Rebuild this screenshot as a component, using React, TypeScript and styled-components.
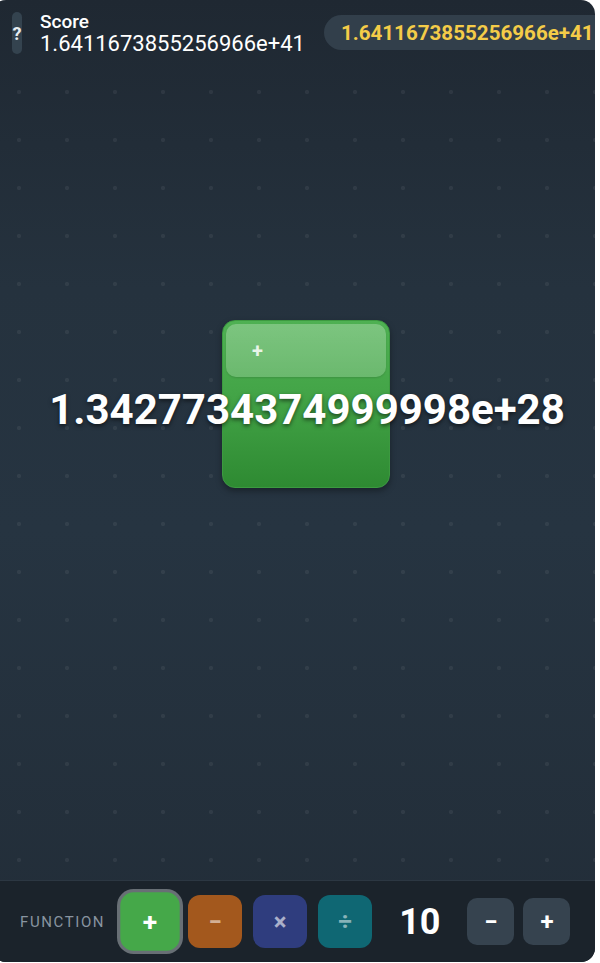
import React from "react";
import styled, { createGlobalStyle } from "styled-components";

const GlobalStyle = createGlobalStyle`
  html, body {
    margin: 0;
    padding: 0;
    background: #ffffff;
    overflow: hidden;
  }
  body {
    font-family: Roboto, "Liberation Sans", sans-serif;
  }
`;

const Frame = styled.div`
  width: 603px;
  height: 962px;
  margin-left: -8px;
  border-radius: 14px;
  overflow: hidden;
  display: flex;
  flex-direction: column;
  background: linear-gradient(180deg, #1f2832 0%, #25323e 30%, #263441 55%, #222d38 100%);
`;

const Header = styled.header`
  height: 64px;
  flex-shrink: 0;
  display: flex;
  align-items: flex-start;
  padding: 12px 0 0 20px;
  box-sizing: border-box;
  gap: 18px;
`;

const HelpButton = styled.button`
  width: 10px;
  height: 42px;
  flex-shrink: 0;
  border: none;
  padding: 0;
  border-radius: 999px;
  background: #34434f;
  color: #e8edf1;
  font-family: inherit;
  font-weight: 700;
  font-size: 18px;
  display: flex;
  align-items: center;
  justify-content: center;
  overflow: visible;
`;

const ScoreBlock = styled.div`
  display: flex;
  flex-direction: column;
  color: #ffffff;
  flex-shrink: 0;
`;

const ScoreTitle = styled.span`
  font-size: 19px;
  font-weight: 500;
  line-height: 20px;
`;

const ScoreValue = styled.span`
  font-size: 22px;
  font-weight: 400;
  line-height: 24px;
`;

const BestPill = styled.div`
  margin-left: 1px;
  margin-top: 3px;
  height: 35px;
  flex-shrink: 0;
  border-radius: 18px;
  background: #323f4b;
  color: #f4cc48;
  font-weight: 700;
  font-size: 20.6px;
  display: flex;
  align-items: center;
  padding: 0 30px 0 17px;
`;

const Canvas = styled.main`
  flex: 1;
  position: relative;
  background-image: radial-gradient(circle, rgba(255, 255, 255, 0.06) 1.8px, transparent 2.4px);
  background-size: 48px 48px;
  background-position: 3px -44px;
`;

const Node = styled.div<{ $left: number; $top: number }>`
  position: absolute;
  left: ${(p) => p.$left}px;
  top: ${(p) => p.$top}px;
  width: 168px;
  height: 168px;
  box-sizing: border-box;
  border-radius: 13px;
  background: linear-gradient(180deg, #4fb153 0%, #43a447 45%, #2e8a32 100%);
  border: 1px solid #3c9a40;
  box-shadow: 0 3px 6px rgba(0, 0, 0, 0.35);
`;

const NodeGloss = styled.div`
  margin: 3px;
  height: 53px;
  border-radius: 10px;
  background: linear-gradient(180deg, rgba(255, 255, 255, 0.26), rgba(255, 255, 255, 0.2));
  box-shadow: 0 1px 2px rgba(0, 0, 0, 0.12);
  display: flex;
  align-items: center;
  padding-left: 26px;
  color: rgba(255, 255, 255, 0.85);
  font-weight: 700;
  font-size: 20px;
`;

const NodeValue = styled.div`
  position: absolute;
  left: 50%;
  top: 88px;
  transform: translate(-50%, -50%);
  margin-left: 1px;
  white-space: nowrap;
  color: #ffffff;
  font-weight: 700;
  font-size: 42px;
  text-shadow: 0 2px 4px rgba(0, 0, 0, 0.55);
`;

const Toolbar = styled.footer`
  height: 82px;
  flex-shrink: 0;
  box-sizing: border-box;
  border-top: 1px solid #2c3742;
  background: #1b232b;
  display: flex;
  align-items: center;
  padding-left: 28px;
`;

const ToolLabel = styled.span`
  color: #8894a0;
  font-size: 15px;
  letter-spacing: 1.6px;
  margin-right: 18px;
`;

const OpGroup = styled.div`
  display: flex;
  gap: 11px;
  align-items: center;
`;

const OpButton = styled.button<{ $bg: string; $ink: string; $active?: boolean }>`
  width: 54px;
  height: 53px;
  border: none;
  border-radius: 12px;
  background: ${(p) => p.$bg};
  color: ${(p) => p.$ink};
  font-family: inherit;
  font-weight: 700;
  font-size: 24px;
  display: flex;
  align-items: center;
  justify-content: center;
  transform: ${(p) => (p.$active ? "scale(1.1)" : "none")};
  box-shadow: ${(p) => (p.$active ? "0 0 0 3px #686f75" : "none")};
`;

const Amount = styled.span`
  color: #ffffff;
  font-weight: 700;
  font-size: 36px;
  margin: 0 27px 0 27px;
`;

const StepButton = styled.button`
  width: 47px;
  height: 47px;
  border: none;
  border-radius: 10px;
  background: #36434f;
  color: #ffffff;
  font-family: inherit;
  font-weight: 700;
  font-size: 24px;
  display: flex;
  align-items: center;
  justify-content: center;
`;

const StepGroup = styled.div`
  display: flex;
  gap: 9px;
`;

const ops = [
  { sym: "+", bg: "#45a849", ink: "#ffffff", active: true },
  { sym: "−", bg: "#a3581d", ink: "rgba(255,255,255,0.55)" },
  { sym: "×", bg: "#2f3d7e", ink: "rgba(255,255,255,0.6)" },
  { sym: "÷", bg: "#0f6773", ink: "rgba(255,255,255,0.5)" },
];

export default function App() {
  const score = "1.6411673855256966e+41";
  return (
    <>
      <GlobalStyle />
      <Frame>
        <Header>
          <HelpButton>?</HelpButton>
          <ScoreBlock>
            <ScoreTitle>Score</ScoreTitle>
            <ScoreValue>{score}</ScoreValue>
          </ScoreBlock>
          <BestPill>{score}</BestPill>
        </Header>
        <Canvas>
          <Node $left={230} $top={256}>
            <NodeGloss>+</NodeGloss>
            <NodeValue>1.3427734374999998e+28</NodeValue>
          </Node>
        </Canvas>
        <Toolbar>
          <ToolLabel>FUNCTION</ToolLabel>
          <OpGroup>
            {ops.map((op) => (
              <OpButton key={op.sym} $bg={op.bg} $ink={op.ink} $active={op.active}>
                {op.sym}
              </OpButton>
            ))}
          </OpGroup>
          <Amount>10</Amount>
          <StepGroup>
            <StepButton>−</StepButton>
            <StepButton>+</StepButton>
          </StepGroup>
        </Toolbar>
      </Frame>
    </>
  );
}
